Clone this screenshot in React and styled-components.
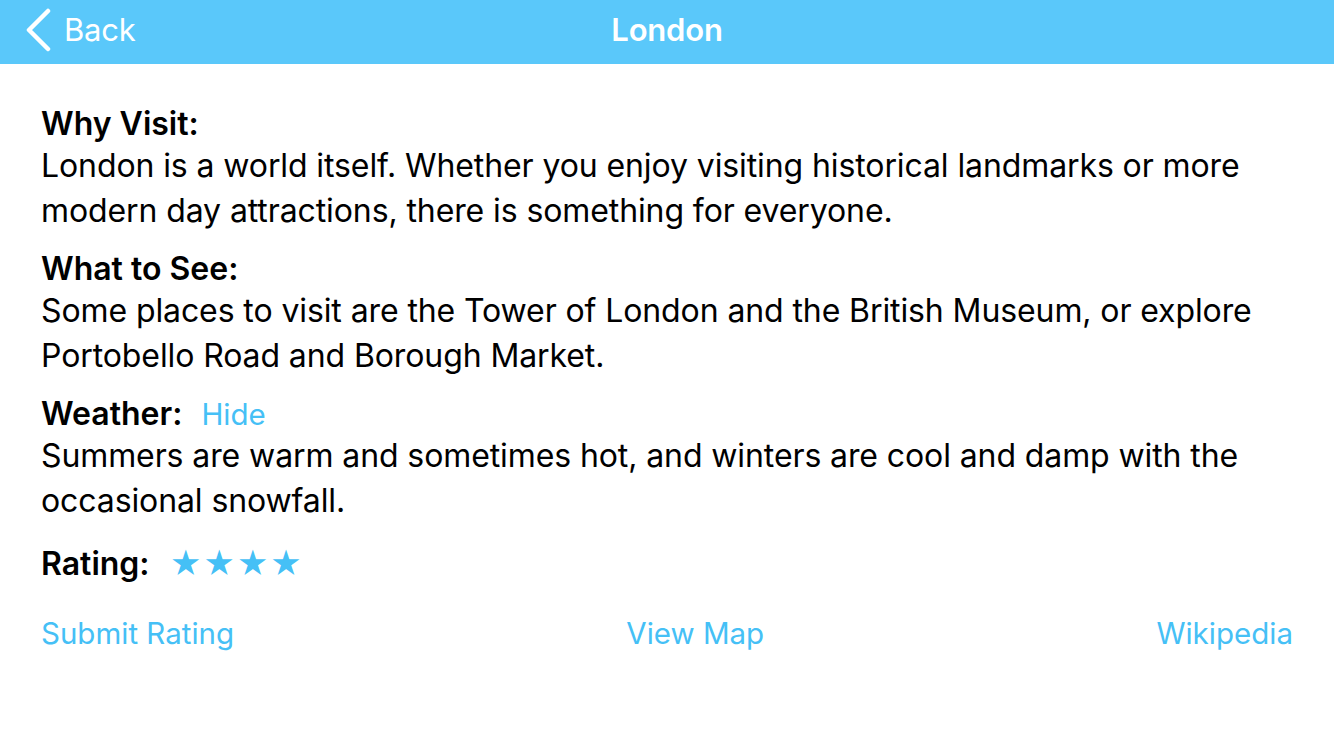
import React from "react";
import styled, { createGlobalStyle } from "styled-components";

const Global = createGlobalStyle`
  html, body { margin: 0; padding: 0; background: #fff; }
  body { font-family: Inter, "Noto Sans", sans-serif; color: #000; }
`;

const Page = styled.div`
  width: 1334px;
  min-height: 750px;
  background: #fff;
`;

const NavBar = styled.header`
  height: 64px;
  box-sizing: border-box;
  padding-bottom: 5px;
  background: #5ac8fa;
  display: grid;
  grid-template-columns: 1fr auto 1fr;
  align-items: center;
  color: #fff;
`;

const BackButton = styled.button`
  justify-self: start;
  display: flex;
  align-items: center;
  gap: 12px;
  padding: 0 0 0 24px;
  background: none;
  border: none;
  color: #fff;
  font-family: inherit;
  font-size: 31px;
  font-weight: 400;
  cursor: pointer;
  letter-spacing: -0.2px;
`;

const Title = styled.h1`
  margin: 0;
  font-size: 31px;
  font-weight: 600;
  letter-spacing: -0.2px;
`;

const Content = styled.main`
  padding: 41px 41px 0;
  display: flex;
  flex-direction: column;
  gap: 17px;
`;

const Section = styled.section`
  display: flex;
  flex-direction: column;
`;

const Heading = styled.div`
  display: flex;
  align-items: baseline;
  gap: 19px;
  font-size: 32px;
  font-weight: 600;
  line-height: 38px;
`;

const Body = styled.p`
  margin: 0;
  font-size: 32px;
  line-height: 45px;
  font-weight: 400;
  letter-spacing: -0.1px;
`;

const Link = styled.a`
  color: #45c0f6;
  font-size: 29.5px;
  font-weight: 400;
  text-decoration: none;
  cursor: pointer;
`;

const RatingRow = styled.div`
  display: flex;
  align-items: center;
  gap: 20px;
  height: 46px;
  font-size: 32px;
  font-weight: 600;
`;

const Stars = styled.div`
  display: flex;
  gap: 1px;
  color: #45c0f6;
  font-size: 31px;
  line-height: 1;
`;

const Actions = styled.nav`
  display: flex;
  justify-content: space-between;
  margin-top: 12px;
`;

const Chevron = () => (
  <svg width="28" height="44" viewBox="0 0 28 44">
    <path d="M24 3 L5 22 L24 41" fill="none" stroke="#fff" strokeWidth="4.5" strokeLinecap="round" strokeLinejoin="round" />
  </svg>
);

const sections = [
  {
    title: "Why Visit:",
    text: "London is a world itself. Whether you enjoy visiting historical landmarks or more modern day attractions, there is something for everyone.",
  },
  {
    title: "What to See:",
    text: "Some places to visit are the Tower of London and the British Museum, or explore Portobello Road and Borough Market.",
  },
  {
    title: "Weather:",
    hide: true,
    text: "Summers are warm and sometimes hot, and winters are cool and damp with the occasional snowfall.",
  },
];

export default function App() {
  return (
    <Page>
      <Global />
      <NavBar>
        <BackButton>
          <Chevron />
          Back
        </BackButton>
        <Title>London</Title>
        <div />
      </NavBar>
      <Content>
        {sections.map((s) => (
          <Section key={s.title}>
            <Heading>
              {s.title}
              {s.hide && <Link>Hide</Link>}
            </Heading>
            <Body>{s.text}</Body>
          </Section>
        ))}
        <RatingRow>
          Rating:
          <Stars>
            <span>★</span>
            <span>★</span>
            <span>★</span>
            <span>★</span>
          </Stars>
        </RatingRow>
        <Actions>
          <Link>Submit Rating</Link>
          <Link>View Map</Link>
          <Link>Wikipedia</Link>
        </Actions>
      </Content>
    </Page>
  );
}
